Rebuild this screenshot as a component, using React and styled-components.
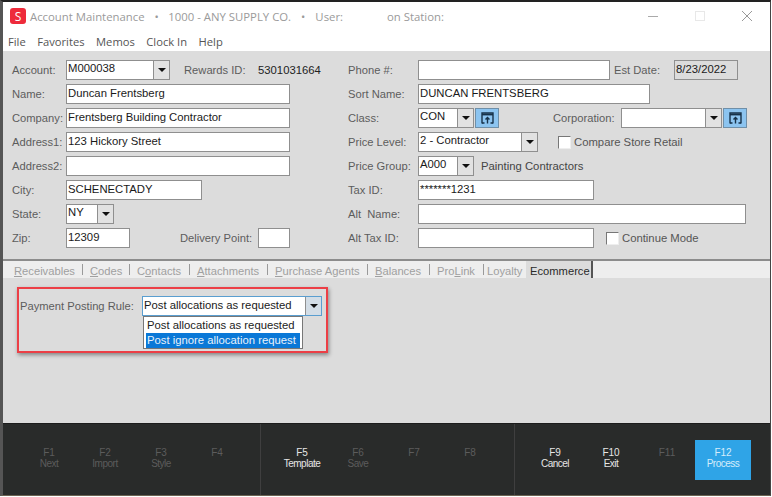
import React from "react";
import styled, { createGlobalStyle } from "styled-components";

const Global = createGlobalStyle`
  html, body { margin: 0; padding: 0; background: #fff; }
  body { width: 772px; height: 497px; overflow: hidden; font-family: "Liberation Sans", Arial, sans-serif; }
`;

const Win = styled.div`
  width: 771px; height: 496px; box-sizing: border-box;
  border-top: 2px solid #222; border-left: 3px solid #555; border-right: 1px solid #444;
  border-bottom: 1px solid #6b6252;
  display: flex; flex-direction: column; background: #fff;
`;
const TitleBar = styled.div`
  height: 26px; flex: none; display: flex; align-items: center; padding: 2px 0 0 7px; box-sizing: border-box;
  font: 11.35px "Open Sans", sans-serif; color: #9a9a9a; background: #fff;
`;
const Logo = styled.div`
  width: 16px; height: 16px; border-radius: 3px; background: #ee2b3b; color: #fff;
  font: 12px "Open Sans", sans-serif; display: flex; align-items: center; justify-content: center;
  margin-right: 4px;
`;
const TitleSeg = styled.span`
  margin-left: ${p => p.$gap || 0}px;
  white-space: pre;
`;
const WinControls = styled.div`
  margin-left: auto; display: flex; align-items: center; height: 100%;
`;
const WinBtn = styled.div`
  width: 47px; height: 100%; display: flex; align-items: center; justify-content: center;
  svg { display: block; }
`;
const MenuBar = styled.div`
  height: 23px; flex: none; display: flex; align-items: center; gap: 11.5px; padding: 4px 0 0 5px;
  font: 11.2px "Open Sans", sans-serif; color: #555; background: #fff; box-sizing: border-box;
`;
const Form = styled.div`
  height: 210px; flex: none; box-sizing: border-box; background: #dcdcdc;
  border-bottom: 2px solid #8c8c8c;
  display: flex; padding: 9px 0 0 9px; font-size: 11.3px;
`;
const Col = styled.div`
  width: ${p => p.$w}px; flex: none; display: flex; flex-direction: column; gap: 4px;
`;
const Row = styled.div`
  height: 20px; display: flex; align-items: center;
`;
const Label = styled.span`
  width: ${p => p.$w}px; flex: none; color: #5c5c5c; white-space: nowrap; font-size: 11.2px;
  margin-left: ${p => p.$ml || 0}px;
`;
const Input = styled.div`
  width: ${p => p.$w}px; height: 20px; flex: none; box-sizing: border-box; background: ${p => p.$bg || "#fff"};
  border: 1px solid #8f8f8f; padding: 0 0 2px 1px; margin-left: ${p => p.$ml || 0}px;
  color: #1a1a1a; font-size: 11.3px; line-height: 16px; white-space: nowrap; overflow: hidden;
`;
const Combo = styled.div`
  width: ${p => p.$w}px; height: 20px; flex: none; box-sizing: border-box; background: #fff;
  border: 1px solid #8f8f8f; display: flex; margin-left: ${p => p.$ml || 0}px;
  color: #1a1a1a; font-size: 11.3px; line-height: 15px;
`;
const ComboText = styled.div`
  flex: 1; padding-left: 1px; white-space: nowrap; overflow: hidden;
`;
const ComboBtn = styled.div`
  width: 15px; flex: none; background: ${p => p.$bg || "#e2e2e2"}; border-left: 1px solid #8f8f8f; display: flex; align-items: center; justify-content: center;
  &::after { content: ""; border-left: 4px solid transparent; border-right: 4px solid transparent; border-top: 4px solid #111; }
`;
const BlueBtn = styled.div`
  width: 24px; height: 20px; flex: none; box-sizing: border-box; background: #8cc4f0; border: 1px solid #6f8fa8;
  margin-left: ${p => p.$ml || 1}px; display: flex; align-items: center; justify-content: center;
`;
const Check = styled.div`
  width: 13px; height: 13px; flex: none; box-sizing: border-box; background: #fff;
  border: 1px solid #777; border-right-color: #eee; border-bottom-color: #eee;
  margin-left: ${p => p.$ml || 0}px; margin-right: 3px;
`;
const Text = styled.span`
  color: ${p => p.$c || "#555"}; margin-left: ${p => p.$ml || 0}px; white-space: nowrap; font-size: 11.3px;
`;
const Tabs = styled.div`
  height: 17px; flex: none; background: #eeeeee; display: flex; padding-left: 11px; font-size: 11.2px;
`;
const Tab = styled.div`
  width: ${p => p.$w}px; flex: none; box-sizing: border-box; height: 17px; line-height: 21px; white-space: nowrap;
  color: #a0a0a0; position: relative;
  u { text-decoration-thickness: 1px; text-underline-offset: 1px; }
  &::after {
    content: ""; position: absolute; right: ${p => p.$sep ?? 7}px; top: 3px; height: 11px; width: 1px;
    background: ${p => p.$nosep ? "transparent" : "#9a9a9a"};
  }
`;
const ActiveTab = styled.div`
  height: 17px; line-height: 21px; background: #dcdcdc; color: #2a2a2a; padding: 0 1px 0 4px;
  border-right: 2px solid #555; white-space: nowrap;
`;
const Panel = styled.div`
  height: 145px; flex: none; background: #dcdcdc; position: relative;
`;
const PanelRow = styled.div`
  display: flex; align-items: center; height: 20px; padding: 18px 0 0 17px; font-size: 11.3px;
`;
const RuleSelect = styled.div`
  width: 180px; height: 20px; box-sizing: border-box; background: #fff; border: 1px solid #5a9ed0; display: flex;
  color: #1a1a1a; font-size: 11.3px; line-height: 17px;
`;
const DropList = styled.div`
  position: absolute; left: 140px; top: 38px; width: 160px; height: 33px; box-sizing: border-box;
  background: #fff; border: 1px solid #777; padding: 1px 2px; font-size: 11.3px; color: #222;
`;
const DropItem = styled.div`
  height: 15px; line-height: 15px; padding-left: 1px; white-space: nowrap;
  background: ${p => p.$sel ? "#0a78d7" : "transparent"}; color: ${p => p.$sel ? "#e8f2fb" : "#222"};
`;
const RedBox = styled.div`
  position: absolute; left: 14px; top: 9px; width: 311px; height: 66px; box-sizing: border-box;
  border: 2px solid #ec3f46; box-shadow: 1px 2px 4px rgba(0,0,0,.4); pointer-events: none;
`;
const FnBar = styled.div`
  flex: 1; background: #292b2a; border-top: 1px solid #1c1c1c; display: flex; font-size: 10px; line-height: 11px;
`;
const FnGroup = styled.div`
  width: ${p => p.$w}px; flex: none; box-sizing: border-box; display: flex; padding: 16px 0 0 ${p => p.$pl}px;
  border-right: ${p => p.$sep ? "1px solid #3f3f3f" : "none"};
`;
const Fn = styled.div`
  width: 56px; height: 40px; flex: none; text-align: center; box-sizing: border-box; padding-top: 7px;
  color: ${p => p.$on ? "#e6e6e6" : "#5c5c5c"};
  background: ${p => p.$primary ? "#2fa4e7" : "transparent"};
  ${p => p.$primary ? "color:#d4ecfb;" : ""}
`;
const FnLabel = styled.span`
  display: block; font-size: 10px; letter-spacing: -0.5px; height: 11px;
`;

const Up = () => (
  <svg width="13" height="12" viewBox="0 0 13 12" fill="none" stroke="#17324a" strokeWidth="1.4">
    <path d="M1 11.5V1h11v10.5" />
    <path d="M1 2.5h11" strokeWidth="1.8" />
    <path d="M6.5 11.5V5.5M4.5 7.6l2-2.1 2 2.1" />
    <path d="M1 11h2.5M9.5 11H12" />
  </svg>
);

const F = ({ k, l, on, primary }) => (
  <Fn $on={on} $primary={primary}>{k}<FnLabel>{l || "\u00a0"}</FnLabel></Fn>
);

export default function App() {
  return (
    <Win>
      <Global />
      <TitleBar>
        <Logo>S</Logo>
        <TitleSeg>Account Maintenance</TitleSeg>
        <TitleSeg $gap={10}>•</TitleSeg>
        <TitleSeg $gap={9.5}>1000 - ANY SUPPLY CO.</TitleSeg>
        <TitleSeg $gap={10}>•</TitleSeg>
        <TitleSeg $gap={10}>User:</TitleSeg>
        <TitleSeg $gap={44}>on Station:</TitleSeg>
        <WinControls>
          <WinBtn><svg width="12" height="12"><path d="M1 6.5h10" stroke="#aaa" /></svg></WinBtn>
          <WinBtn><svg width="12" height="12"><rect x="1.5" y="1.5" width="9" height="9" fill="none" stroke="#e8e8e8" /></svg></WinBtn>
          <WinBtn><svg width="12" height="12"><path d="M1 1l10 10M11 1L1 11" stroke="#999" /></svg></WinBtn>
        </WinControls>
      </TitleBar>
      <MenuBar>
        <span>File</span><span>Favorites</span><span>Memos</span><span>Clock In</span><span>Help</span>
      </MenuBar>
      <Form>
        <Col $w={336}>
          <Row>
            <Label $w={54}>Account:</Label>
            <Combo $w={104}><ComboText>M000038</ComboText><ComboBtn /></Combo>
            <Label $w={74} $ml={14}>Rewards ID:</Label>
            <Text $c="#222">5301031664</Text>
          </Row>
          <Row><Label $w={54}>Name:</Label><Input $w={224}>Duncan Frentsberg</Input></Row>
          <Row><Label $w={54}>Company:</Label><Input $w={224}>Frentsberg Building Contractor</Input></Row>
          <Row><Label $w={54}>Address1:</Label><Input $w={224}>123 Hickory Street</Input></Row>
          <Row><Label $w={54}>Address2:</Label><Input $w={224} /></Row>
          <Row><Label $w={54}>City:</Label><Input $w={136}>SCHENECTADY</Input></Row>
          <Row>
            <Label $w={54}>State:</Label>
            <Combo $w={48}><ComboText>NY</ComboText><ComboBtn /></Combo>
          </Row>
          <Row>
            <Label $w={54}>Zip:</Label><Input $w={64}>12309</Input>
            <Label $w={78} $ml={50}>Delivery Point:</Label><Input $w={32} />
          </Row>
        </Col>
        <Col $w={420}>
          <Row>
            <Label $w={70}>Phone #:</Label><Input $w={192} />
            <Label $w={60} $ml={4}>Est Date:</Label><Input $w={64} $bg="#dcdcdc">8/23/2022</Input>
          </Row>
          <Row><Label $w={70}>Sort Name:</Label><Input $w={232}>DUNCAN FRENTSBERG</Input></Row>
          <Row>
            <Label $w={70}>Class:</Label>
            <Combo $w={56}><ComboText>CON</ComboText><ComboBtn /></Combo>
            <BlueBtn><Up /></BlueBtn>
            <Label $w={68} $ml={54}>Corporation:</Label>
            <Combo $w={101}><ComboText /><ComboBtn /></Combo>
            <BlueBtn><Up /></BlueBtn>
          </Row>
          <Row>
            <Label $w={70}>Price Level:</Label>
            <Combo $w={120}><ComboText>2 - Contractor</ComboText><ComboBtn /></Combo>
            <Check $ml={20} /><Text>Compare Store Retail</Text>
          </Row>
          <Row>
            <Label $w={70}>Price Group:</Label>
            <Combo $w={56}><ComboText>A000</ComboText><ComboBtn /></Combo>
            <Text $ml={7} $c="#444">Painting Contractors</Text>
          </Row>
          <Row><Label $w={70}>Tax ID:</Label><Input $w={176}>*******1231</Input></Row>
          <Row><Label $w={70}>Alt&nbsp; Name:</Label><Input $w={328} /></Row>
          <Row>
            <Label $w={70}>Alt Tax ID:</Label><Input $w={176} />
            <Check $ml={12} /><Text>Continue Mode</Text>
          </Row>
        </Col>
      </Form>
      <Tabs>
        <Tab $w={76}><u>R</u>eceivables</Tab>
        <Tab $w={47}><u>C</u>odes</Tab>
        <Tab $w={60}>C<u>o</u>ntacts</Tab>
        <Tab $w={78}><u>A</u>ttachments</Tab>
        <Tab $w={100}><u>P</u>urchase Agents</Tab>
        <Tab $w={62}><u>B</u>alances</Tab>
        <Tab $w={50} $sep={3}>Pro<u>L</u>ink</Tab>
        <Tab $w={39} $nosep>Loyalty</Tab>
        <ActiveTab>Ecommerce</ActiveTab>
      </Tabs>
      <Panel>
        <PanelRow>
          <Label $w={122}>Payment Posting Rule:</Label>
          <RuleSelect><ComboText>Post allocations as requested</ComboText><ComboBtn $bg="#d3dde6" /></RuleSelect>
        </PanelRow>
        <DropList>
          <DropItem>Post allocations as requested</DropItem>
          <DropItem $sel>Post ignore allocation request</DropItem>
        </DropList>
        <RedBox />
      </Panel>
      <FnBar>
        <FnGroup $w={258} $pl={18} $sep>
          <F k="F1" l="Next" /><F k="F2" l="Import" /><F k="F3" l="Style" /><F k="F4" />
        </FnGroup>
        <FnGroup $w={254} $pl={13} $sep>
          <F k="F5" l="Template" on /><F k="F6" l="Save" /><F k="F7" /><F k="F8" />
        </FnGroup>
        <FnGroup $w={256} $pl={12}>
          <F k="F9" l="Cancel" on /><F k="F10" l="Exit" on /><F k="F11" /><F k="F12" l="Process" primary />
        </FnGroup>
      </FnBar>
    </Win>
  );
}
